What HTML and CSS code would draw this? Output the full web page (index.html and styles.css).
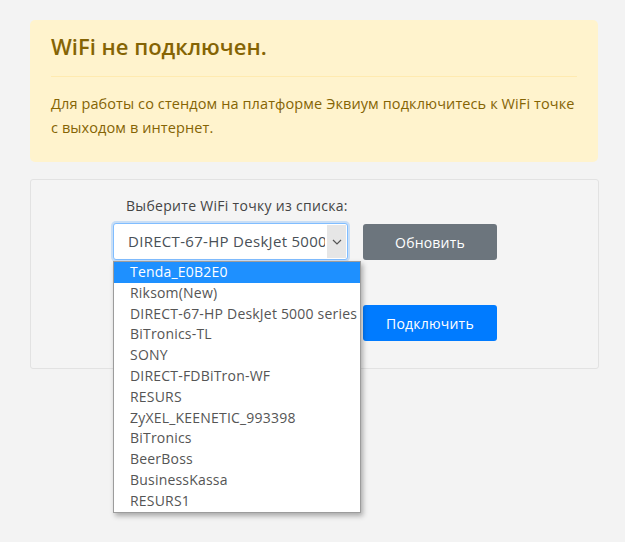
FILE: index.html
```html
<!DOCTYPE html>
<html lang="ru">
<head>
<meta charset="utf-8">
<link rel="stylesheet" href="styles.css">
</head>
<body>
<div class="page">
  <div class="alert">
    <h4 class="alert-title">WiFi не подключен.</h4>
    <hr class="alert-sep">
    <p class="alert-text">Для работы со стендом на платформе Эквиум подключитесь к WiFi точке с выходом в интернет.</p>
  </div>
  <div class="card">
    <div class="label">Выберите WiFi точку из списка:</div>
    <div class="row">
      <div class="select">
        <span class="select-value">DIRECT-67-HP DeskJet 5000 series</span>
        <span class="select-arrow"><svg width="10" height="6" viewBox="0 0 10 6"><path d="M1 1 L5 5 L9 1" fill="none" stroke="#555" stroke-width="1.2"/></svg></span>
        <div class="dropdown">
          <div class="opt active">Tenda_E0B2E0</div>
          <div class="opt">Riksom(New)</div>
          <div class="opt">DIRECT-67-HP DeskJet 5000 series</div>
          <div class="opt">BiTronics-TL</div>
          <div class="opt">SONY</div>
          <div class="opt">DIRECT-FDBiTron-WF</div>
          <div class="opt">RESURS</div>
          <div class="opt">ZyXEL_KEENETIC_993398</div>
          <div class="opt">BiTronics</div>
          <div class="opt">BeerBoss</div>
          <div class="opt">BusinessKassa</div>
          <div class="opt">RESURS1</div>
        </div>
      </div>
      <button class="btn btn-gray">Обновить</button>
    </div>
    <div class="row row2">
      <button class="btn btn-blue">Подключить</button>
    </div>
  </div>
</div>
</body>
</html>
```

FILE: styles.css
```css
html, body {
  margin: 0;
  padding: 0;
  background: #f3f3f3;
  font-family: "Open Sans", "Noto Sans", sans-serif;
}
.page {
  padding: 20px 27px 0 30px;
  min-height: 542px;
  box-sizing: border-box;
}
.alert {
  background: #fff3cd;
  border-radius: 5px;
  padding: 13px 15px 21px 21px;
  color: #856404;
  height: 108px;
}
.alert-title {
  margin: 0;
  font-size: 22px;
  font-weight: 600;
  line-height: 27px;
}
.alert-sep {
  margin: 16px 6px 15px 0;
  border: 0;
  border-top: 1px solid #ffeab0;
}
.alert-text {
  margin: 0;
  font-size: 14.5px;
  line-height: 24px;
  letter-spacing: 0.1px;
}
.card {
  margin-top: 17px;
  background: #f4f4f4;
  border: 1px solid #e2e2e2;
  border-radius: 3px;
  height: 190px;
  padding: 0 0 0 82px;
  box-sizing: border-box;
  width: 569px;
}
.label {
  margin: 16px 0 0 13px;
  font-size: 14px;
  line-height: 20px;
  color: #444;
  letter-spacing: 0.3px;
}
.row {
  display: flex;
  align-items: flex-start;
  gap: 15px;
  margin-top: 7px;
}
.row2 {
  margin-top: 45px;
  padding-left: 250px;
}
.select {
  position: relative;
  width: 235px;
  height: 37px;
  box-sizing: border-box;
  border: 1px solid #80bdff;
  border-radius: 3px;
  background: #fff;
  box-shadow: 0 0 0 2px rgba(0, 123, 255, 0.18);
  display: flex;
  align-items: stretch;
}
.select-value {
  flex: 1;
  overflow: hidden;
  white-space: nowrap;
  font-size: 15px;
  letter-spacing: 0.3px;
  line-height: 35px;
  padding-left: 14px;
  color: #495057;
  margin-right: 2px;
}
.select-arrow {
  width: 19px;
  background: #e6e6e6;
  display: flex;
  align-items: center;
  justify-content: center;
  margin: 1px 1px 1px 0;
}
.dropdown {
  position: absolute;
  left: -1px;
  top: 37px;
  width: 246px;
  background: #fff;
  border: 1px solid #9c9c9c;
  box-shadow: 2px 3px 5px rgba(0, 0, 0, 0.3);
  z-index: 10;
}
.opt {
  height: 20.8px;
  line-height: 20.8px;
  font-size: 14px;
  padding-left: 16px;
  color: #555;
  white-space: nowrap;
  letter-spacing: 0.2px;
}
.opt.active {
  background: #1e90ff;
  color: #fff;
}
.btn {
  width: 134px;
  height: 36px;
  border: 0;
  border-radius: 3px;
  color: #fff;
  font-family: "Open Sans", "Noto Sans", sans-serif;
  font-size: 14px;
  letter-spacing: 0.2px;
  margin-top: 1px;
}
.btn-gray {
  background: #6c757d;
}
.btn-blue {
  background: #007bff;
  margin-top: 0;
}
```
